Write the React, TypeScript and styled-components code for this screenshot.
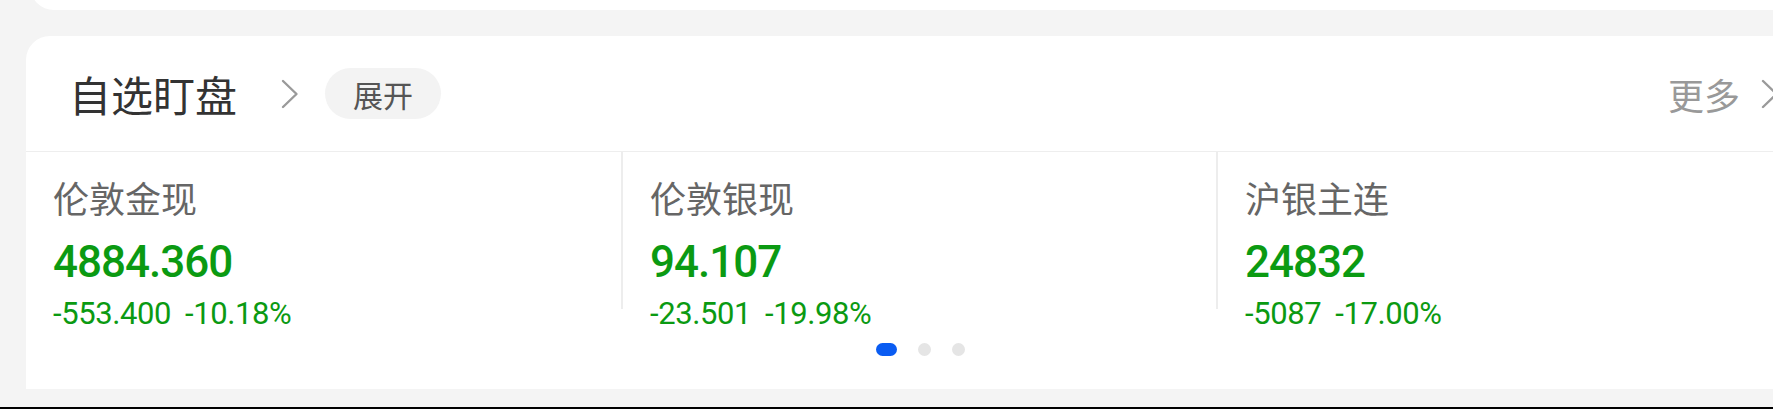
import React from "react";
import styled, { createGlobalStyle } from "styled-components";

const GlobalStyle = createGlobalStyle`
  html, body {
    margin: 0;
    padding: 0;
    background: #f4f4f4;
    overflow: hidden;
  }
  body {
    font-family: "Noto Sans CJK SC", "Noto Sans", sans-serif;
  }
`;

const Page = styled.div`
  width: 1773px;
  height: 409px;
  display: flex;
  flex-direction: column;
  overflow: hidden;
  background: #f4f4f4;
`;

const TopCardStub = styled.div`
  flex-shrink: 0;
  margin-top: -30px;
  margin-left: 30px;
  width: 1800px;
  height: 40px;
  background: #ffffff;
  border-bottom-left-radius: 24px;
`;

const Card = styled.section`
  flex-shrink: 0;
  margin-top: 26px;
  margin-left: 26px;
  width: 1788px;
  height: 353px;
  background: #ffffff;
  border-top-left-radius: 24px;
  display: flex;
  flex-direction: column;
`;

const Header = styled.header`
  height: 115px;
  border-bottom: 1px solid #eeeeee;
  display: flex;
  align-items: center;
  padding: 0 35px 0 43px;
`;

const Title = styled.h2`
  margin: 0;
  font-size: 42px;
  font-weight: 400;
  line-height: 1;
  color: #333333;
`;

const ChevronBox = styled.span<{ $gap: number }>`
  display: inline-flex;
  margin-left: ${(p) => p.$gap}px;
`;

const Pill = styled.button`
  margin-left: 26px;
  width: 116px;
  height: 51px;
  border: none;
  border-radius: 26px;
  background: #f3f3f3;
  color: #555555;
  font-family: "Noto Sans CJK SC", sans-serif;
  font-size: 30px;
  line-height: 1;
  padding: 0;
  display: flex;
  align-items: center;
  justify-content: center;
`;

const More = styled.div`
  margin-left: auto;
  display: flex;
  align-items: center;
  gap: 21px;
  font-size: 36px;
  line-height: 1;
  color: #999999;
`;

const Quotes = styled.div`
  display: grid;
  grid-template-columns: repeat(3, 595px);
`;

const Quote = styled.div<{ $first?: boolean }>`
  height: 157px;
  box-sizing: border-box;
  padding: 27px 0 0 27px;
  border-left: ${(p) => (p.$first ? "none" : "2px solid #ededed")};
  display: flex;
  flex-direction: column;
`;

const Name = styled.div`
  font-size: 36px;
  line-height: 1;
  color: #666666;
`;

const Price = styled.div`
  margin-top: 25px;
  font-family: Roboto, "Liberation Sans", sans-serif;
  font-size: 44px;
  font-weight: 500;
  letter-spacing: -1px;
  line-height: 1;
  color: #0b9a12;
`;

const Change = styled.div`
  margin-top: 14px;
  display: flex;
  gap: 14px;
  font-family: Roboto, "Liberation Sans", sans-serif;
  font-size: 31px;
  letter-spacing: -0.4px;
  line-height: 1;
  color: #0b9a12;
`;

const Dots = styled.div`
  display: flex;
  justify-content: center;
  align-items: center;
  gap: 21px;
  padding-top: 34px;
`;

const Dot = styled.span<{ $active?: boolean }>`
  display: block;
  width: ${(p) => (p.$active ? 21 : 13)}px;
  height: 13px;
  border-radius: 7px;
  background: ${(p) => (p.$active ? "#0a5cf2" : "#e5e5e5")};
`;

const BottomEdge = styled.div`
  margin-top: auto;
  height: 2px;
  background: #000000;
  flex-shrink: 0;
`;

const Chevron = () => (
  <svg width="18" height="30" viewBox="0 0 18 30" fill="none">
    <polyline
      points="2,2 15.5,15 2,28"
      stroke="#9a9a9a"
      strokeWidth="2.4"
      strokeLinecap="round"
      strokeLinejoin="round"
    />
  </svg>
);

const quotes = [
  { name: "伦敦金现", price: "4884.360", diff: "-553.400", pct: "-10.18%" },
  { name: "伦敦银现", price: "94.107", diff: "-23.501", pct: "-19.98%" },
  { name: "沪银主连", price: "24832", diff: "-5087", pct: "-17.00%" },
];

export default function App() {
  return (
    <>
      <GlobalStyle />
      <Page>
        <TopCardStub />
        <Card>
          <Header>
            <Title>自选盯盘</Title>
            <ChevronBox $gap={44}>
              <Chevron />
            </ChevronBox>
            <Pill>展开</Pill>
            <More>
              <span>更多</span>
              <Chevron />
            </More>
          </Header>
          <Quotes>
            {quotes.map((q, i) => (
              <Quote key={q.name} $first={i === 0}>
                <Name>{q.name}</Name>
                <Price>{q.price}</Price>
                <Change>
                  <span>{q.diff}</span>
                  <span>{q.pct}</span>
                </Change>
              </Quote>
            ))}
          </Quotes>
          <Dots>
            <Dot $active />
            <Dot />
            <Dot />
          </Dots>
        </Card>
        <BottomEdge />
      </Page>
    </>
  );
}
